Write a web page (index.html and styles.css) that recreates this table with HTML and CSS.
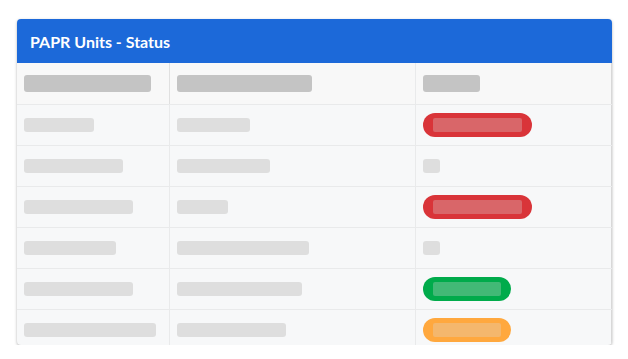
FILE: index.html
```html
<!DOCTYPE html>
<html lang="en">
<head>
    <meta charset="UTF-8">
    <meta name="viewport" content="width=device-width, initial-scale=1.0">
    <title>PAPR Units - Status</title>
    <link rel="stylesheet" href="styles.css">
</head>
<body>
    <div class="card">
        <div class="card-head">
            <h2>PAPR Units - Status</h2>
        </div>
        <div class="table">
            <div class="row head-row">
                <div class="cell"><span class="bar head-bar" style="width:127px"></span></div>
                <div class="cell"><span class="bar head-bar" style="width:135px"></span></div>
                <div class="cell"><span class="bar head-bar" style="width:57px"></span></div>
            </div>
            <div class="row">
                <div class="cell"><span class="bar" style="width:70px"></span></div>
                <div class="cell"><span class="bar" style="width:73px"></span></div>
                <div class="cell"><span class="pill red"><span class="pill-text" style="width:89px"></span></span></div>
            </div>
            <div class="row">
                <div class="cell"><span class="bar" style="width:99px"></span></div>
                <div class="cell"><span class="bar" style="width:93px"></span></div>
                <div class="cell"><span class="bar" style="width:17px"></span></div>
            </div>
            <div class="row">
                <div class="cell"><span class="bar" style="width:109px"></span></div>
                <div class="cell"><span class="bar" style="width:51px"></span></div>
                <div class="cell"><span class="pill red"><span class="pill-text" style="width:89px"></span></span></div>
            </div>
            <div class="row">
                <div class="cell"><span class="bar" style="width:92px"></span></div>
                <div class="cell"><span class="bar" style="width:132px"></span></div>
                <div class="cell"><span class="bar" style="width:17px"></span></div>
            </div>
            <div class="row">
                <div class="cell"><span class="bar" style="width:109px"></span></div>
                <div class="cell"><span class="bar" style="width:125px"></span></div>
                <div class="cell"><span class="pill green"><span class="pill-text" style="width:68px"></span></span></div>
            </div>
            <div class="row">
                <div class="cell"><span class="bar" style="width:132px"></span></div>
                <div class="cell"><span class="bar" style="width:109px"></span></div>
                <div class="cell"><span class="pill orange"><span class="pill-text" style="width:68px"></span></span></div>
            </div>
        </div>
    </div>
</body>
</html>
```

FILE: styles.css
```css
:root{
    --blue: #1c69d9;
    --line: #e9eaeb;
}
*{
    box-sizing: border-box;
}
body{
    margin: 0;
    padding: 19px 16px 0 17px;
    background: #fff;
    font-family: Lato, "Open Sans", sans-serif;
}
.card{
    width: 595px;
    height: 326px;
    border-radius: 4px;
    overflow: hidden;
    background: #f7f8f9;
    box-shadow: 0 1px 3px rgba(0, 0, 0, 0.3);
}
.card-head{
    height: 44px;
    background: var(--blue);
    display: flex;
    align-items: center;
    padding: 0 13px;
}
.card-head h2{
    margin: 0;
    color: #fff;
    font-size: 16px;
    font-weight: 700;
}
.row{
    display: grid;
    grid-template-columns: 153px 246px 196px;
    height: 41px;
    border-bottom: 1px solid var(--line);
}
.cell{
    display: flex;
    align-items: center;
    padding-left: 7px;
    border-right: 1px solid var(--line);
}
.cell:last-child{
    border-right: 1px solid #d8d8d8;
}
.head-row{
    height: 42px;
    background: #f8f8f8;
}
.head-row .cell:first-child{
    border-right-color: #e0e0e0;
}
.bar{
    display: block;
    height: 14px;
    border-radius: 3px;
    background: #dedede;
}
.head-bar{
    height: 17px;
    background: #c4c4c4;
}
.pill{
    display: flex;
    align-items: center;
    height: 24px;
    padding: 0 10px;
    border-radius: 12px;
}
.pill-text{
    display: block;
    height: 14px;
    border-radius: 2px;
    background: rgba(220, 220, 220, 0.3);
}
.red{
    background: #d93439;
}
.green{
    background: #00ab4b;
}
.orange{
    background: #ffa83e;
}
```
